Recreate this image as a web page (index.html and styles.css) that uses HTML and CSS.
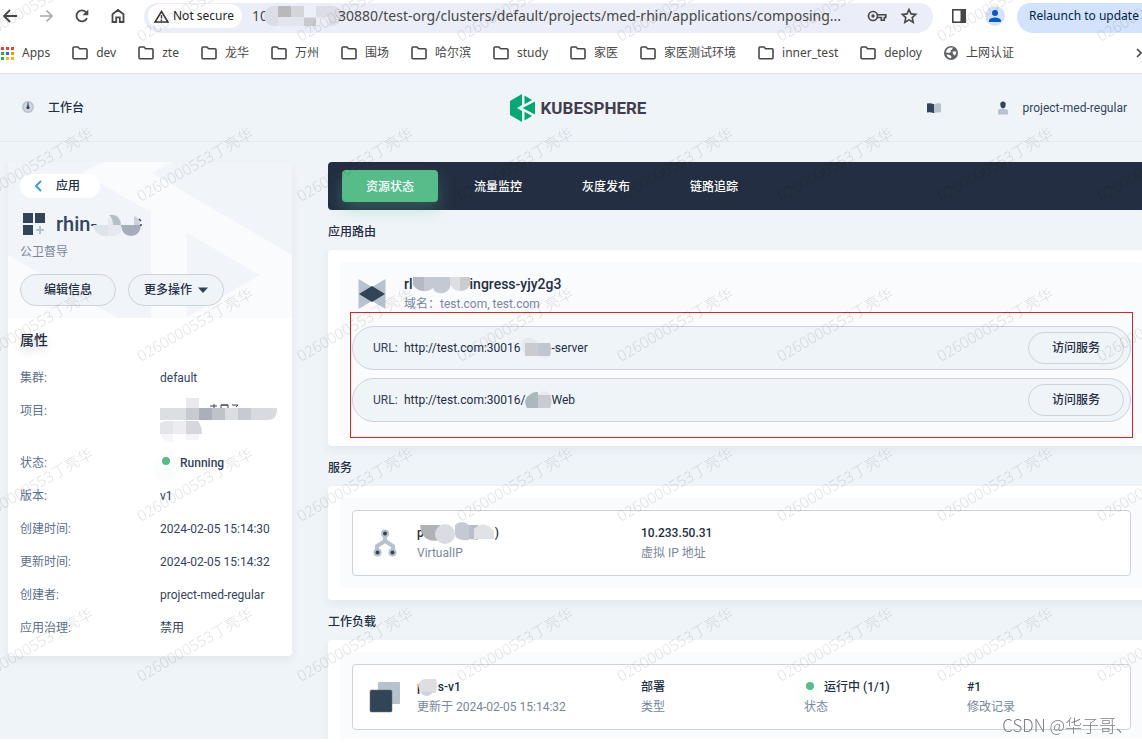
FILE: index.html
```html
<!DOCTYPE html>
<html lang="zh-CN">
<head>
<meta charset="utf-8">
<meta name="viewport" content="width=device-width, initial-scale=1">
<title>KubeSphere</title>
<link rel="stylesheet" href="styles.css">
</head>
<body>
<svg class="sprite" aria-hidden="true">
  <symbol id="folder" viewBox="0 0 16 14"><path d="M1 2.2C1 1.5 1.4 1 2 1h4l1.6 1.8H14c.6 0 1 .4 1 1v8c0 .6-.4 1-1 1H2c-.6 0-1-.4-1-1z" fill="none" stroke="#474747" stroke-width="1.6"/></symbol>
</svg>

<div class="toolbar">
  <div class="nav-buttons">
    <button class="icon-btn" aria-label="Back"><svg width="16" height="16" viewBox="0 0 16 16" fill="none" stroke="#474747" stroke-width="1.8"><path d="M15 8H2.500M8 2 2 8l6 6"/></svg></button>
    <button class="icon-btn" aria-label="Forward"><svg width="16" height="16" viewBox="0 0 16 16" fill="none" stroke="#a9a9a9" stroke-width="1.600"><path d="M2 8h11M8.500 2.500 14 8l-5.500 5.500"/></svg></button>
    <button class="icon-btn" aria-label="Reload"><svg width="16" height="16" viewBox="0 0 16 16"><path d="M13 10.200A5.500 5.500 0 1 1 12.300 4.500L13.500 6" fill="none" stroke="#474747" stroke-width="1.800"/><path d="M14.300 1.500v5.800H8.500z" fill="#474747"/></svg></button>
    <button class="icon-btn" aria-label="Home"><svg width="16" height="16" viewBox="0 0 16 16" fill="none" stroke="#474747" stroke-width="1.800"><path d="M2.500 14V6.300L8 2l5.500 4.300V14H9.800V9.300H6.200V14z"/></svg></button>
  </div>
  <div class="omnibox">
    <button class="chip"><svg width="15" height="13" viewBox="0 0 15 13"><path d="M7.500 1.500 14 12H1z" fill="none" stroke="#333" stroke-width="1.500"/><path d="M7.500 5v3.500M7.500 9.500V11" stroke="#333" stroke-width="1.300"/></svg>Not secure</button>
    <span class="url"><span>10</span><svg class="mosaic" width="76" height="22" viewBox="0 0 76 22"><path d="M10 1h58a10 10 0 0 1 0 20H10A10 10 0 0 1 10 1" fill="#dcdde6"/><path d="M14 1h13v11H14z" fill="#b8b8bd"/><path d="M27 1h13v11H27z" fill="#d3d4dc"/><path d="M40 1h12v11H40z" fill="#eef0f7"/><path d="M14 12h26v9H14z" fill="#e3e5ee"/><path d="M40 13h12v8H40z" fill="#c9cacf"/><path d="M52 12h13v9H52z" fill="#eceef7"/></svg><span class="path">30880/test-org/clusters/default/projects/med-rhin/applications/composing...</span></span>
    <button class="icon-btn key" aria-label="Passwords"><svg width="20" height="12" viewBox="0 0 20 12"><circle cx="6" cy="6" r="4.500" fill="none" stroke="#474747" stroke-width="1.700"/><circle cx="6" cy="6" r="1.700" fill="#474747"/><path d="M10 4.800h8.800v2.700h-1.500v2.700h-3V7.500H10" fill="none" stroke="#474747" stroke-width="1.600"/></svg></button>
    <button class="icon-btn" aria-label="Bookmark"><svg width="16" height="16" viewBox="0 0 16 16"><path d="m8 1.500 2 4.400 4.700.500-3.500 3.200 1 4.700L8 11.900l-4.200 2.400 1-4.700L1.300 6.400 6 5.900z" fill="none" stroke="#474747" stroke-width="1.600"/></svg></button>
  </div>
  <button class="icon-btn panel-btn" aria-label="Side panel"><svg width="16" height="16" viewBox="0 0 16 16"><rect x="1.800" y="1.800" width="12.400" height="12.400" fill="none" stroke="#474747" stroke-width="1.600"/><path d="M9.500 1.500H14.500v13H9.500z" fill="#474747"/></svg></button>
  <button class="icon-btn avatar" aria-label="Profile"><svg width="20" height="20" viewBox="0 0 20 20"><circle cx="10" cy="10" r="10" fill="#d3e3fd"/><circle cx="10" cy="7" r="3" fill="#0b57d0"/><path d="M4 16v-1.500c0-2 4-3 6-3s6 1 6 3V16z" fill="#0b57d0"/></svg></button>
  <button class="relaunch">Relaunch to update</button>
</div>

<nav class="bookmarks" aria-label="Bookmarks">
  <a href="#" class="apps"><svg width="13" height="13" viewBox="0 0 13 13"><path d="M0 0h3v3H0zM5 0h3v3H5zM10 0h3v3h-3z" fill="#ea4335"/><path d="M0 5h3v3H0z" fill="#34a853"/><path d="M5 5h3v3H5z" fill="#1a73e8"/><path d="M10 5h3v3h-3z" fill="#f29900"/><path d="M0 10h3v3H0z" fill="#34a853"/><path d="M5 10h3v3H5zM10 10h3v3h-3z" fill="#fbbc04"/></svg>Apps</a>
  <a href="#"><svg width="16" height="14"><use href="#folder"/></svg>dev</a>
  <a href="#"><svg width="16" height="14"><use href="#folder"/></svg>zte</a>
  <a href="#"><svg width="16" height="14"><use href="#folder"/></svg>龙华</a>
  <a href="#"><svg width="16" height="14"><use href="#folder"/></svg>万州</a>
  <a href="#"><svg width="16" height="14"><use href="#folder"/></svg>围场</a>
  <a href="#"><svg width="16" height="14"><use href="#folder"/></svg>哈尔滨</a>
  <a href="#"><svg width="16" height="14"><use href="#folder"/></svg>study</a>
  <a href="#"><svg width="16" height="14"><use href="#folder"/></svg>家医</a>
  <a href="#"><svg width="16" height="14"><use href="#folder"/></svg>家医测试环境</a>
  <a href="#"><svg width="16" height="14"><use href="#folder"/></svg>inner_test</a>
  <a href="#"><svg width="16" height="14"><use href="#folder"/></svg>deploy</a>
  <a href="#"><svg width="14" height="14" viewBox="0 0 14 14"><circle cx="7" cy="7" r="7" fill="#5f6368"/><path d="M5.500 1.800 9 1.500 8 3.500 6.500 4.500 7 6 4.500 7 2 6.500C2 4.500 3.500 2.500 5.500 1.800M8.500 5.500 12.300 5.500 12 8 10.500 9.500 9 8zM2.500 8.500 6 9 7.500 10.500 7 12.300C4.800 12.300 3 10.800 2.500 8.500" fill="#fff"/></svg>上网认证</a>
  <button class="more" aria-label="More bookmarks"><svg width="5" height="10" viewBox="0 0 5 10" fill="none" stroke="#474747" stroke-width="1.600"><path d="m0 1 4 4-4 4"/></svg></button>
</nav>

<div class="app">
  <header class="header">
    <a href="#" class="workbench"><svg width="16" height="16" viewBox="0 0 16 16"><circle cx="8" cy="7" r="6" fill="#b6c2cd"/><circle cx="8" cy="7" r="4.500" fill="#cdd6df"/><path d="M8 2.500v5" stroke="#324558"/><path d="M8 4.500 9.800 8a2 2 0 0 1-3.600 0z" fill="#324558"/></svg>工作台</a>
    <a href="#" class="logo"><svg width="26" height="28" viewBox="0 0 26 28" fill="#00a971"><path d="M12 0v11L7 14l5 3v11L0 21V7zM14.500 1.500 22 6l-7.500 4.200zM25 7.500v13L12.500 14zM14.500 17.800 22 22l-7.500 4.500z"/></svg><span>KUBESPHERE</span></a>
    <div class="account">
      <button class="icon-btn" aria-label="Documentation"><svg width="16" height="16" viewBox="0 0 16 16"><path d="M1 3.500q3.500-.8 7 .8v9q-3.500-1.500-7-.8z" fill="#324558"/><path d="M15 3.500q-3.500-.8-7 .8v9q3.500-1.500 7-.8z" fill="#b6c2cd"/></svg></button>
      <button class="user"><svg width="16" height="16" viewBox="0 0 16 16"><path d="M3 14.500V11q0-2 2.500-2h5Q13 9 13 11v3.500z" fill="#b6c2cd"/><path d="M5.300 4q0-2.500 2.700-2.500T10.700 4Q10.700 8 8 8.500 5.300 8 5.300 4" fill="#324558"/></svg>project-med-regular</button>
    </div>
  </header>

  <div class="content">
    <aside class="sidebar">
      <div class="side-head">
        <svg class="side-bg" viewBox="0 0 284 156" preserveAspectRatio="none" aria-hidden="true"><path fill="#fafbfd" fill-rule="evenodd" d="M0 93 109 156H0zM95 0 74 11l69 39v106h141V93L144 11 164 0zM179 71l73 42-73 42z"/></svg>
        <a href="#" class="back"><svg width="8" height="12" viewBox="0 0 8 12" fill="none" stroke="#329dce" stroke-width="1.800"><path d="M7 1 2 6l5 5"/></svg>应用</a>
        <h1><svg width="24" height="24" viewBox="0 0 24 24"><path d="M1 1h10v10H1zM13 1h10v10H13zM1 13h10v10H1z" fill="#324558"/><path d="M17 14h2v3h3v2h-3v3h-2v-3h-3v-2h3z" fill="#b6c2cd"/></svg><span>rhin-</span><svg class="mosaic" width="49" height="22" viewBox="0 0 49 22"><path d="M0 12h15v11A13 13 0 0 1 0 12" fill="#dfe3ea"/><path d="M15 12V5a10 10 0 0 1 13 7v8a12 12 0 0 1-13 2z" fill="#e6e9ef"/><path d="M16 2q11-2 12 10h-8Q20 5 16 2" fill="#b7bec9"/><path d="M28 12h20q-1 11-10 11T28 12" fill="#a6adba"/><path d="M41 3q6 2 6 9h-6z" fill="#cdd1d9"/><path d="m46 6 2 2M47 12h2" stroke="#36435c" stroke-width="1.500"/></svg></h1>
        <p class="desc">公卫督导</p>
        <div class="actions">
          <button class="pill">编辑信息</button>
          <button class="pill">更多操作<svg width="10" height="6" viewBox="0 0 10 6"><path d="M0 .5h10L5 6z" fill="#324558"/></svg></button>
        </div>
      </div>
      <div class="attrs">
        <h2>属性</h2>
        <dl>
          <dt>集群:</dt><dd>default</dd>
          <dt>项目:</dt><dd><svg class="project" width="118" height="39" viewBox="0 0 118 39"><path d="M26-3h13V9H26z" fill="#e9eaed"/><path d="M0 7h26v12H0z" fill="#dcdee3"/><path d="M26 7h13v12H26z" fill="#c8cad0"/><path d="M39 7h13v12H39z" fill="#abafb9"/><path d="M52 7h13v12H52z" fill="#c0c2c9"/><path d="M65 7h13v12H65z" fill="#dcdde2"/><path d="M78 7h13v12H78z" fill="#c7cad2"/><path d="M91 7h26q1 12-10 12H91z" fill="#d8dae0"/><path d="M0 22q6-3 13-2v13H0z" fill="#e4e5ea"/><path d="M13 20h13v13H13z" fill="#ededf1"/><path d="M26 20h12q4 5 4 13H26z" fill="#d5d7dd"/><path d="M0 33h13v8Q3 41 0 33M26 33h13v6H26z" fill="#f5f5f7"/><path d="M50 5h7M54 3v4M61 4h7M61 7V4h7v3M72 4h6l-2 2" fill="none" stroke="#36435c"/></svg></dd>
          <dt>状态:</dt><dd class="strong"><i class="dot"></i>Running</dd>
          <dt>版本:</dt><dd>v1</dd>
          <dt>创建时间:</dt><dd>2024-02-05 15:14:30</dd>
          <dt>更新时间:</dt><dd>2024-02-05 15:14:32</dd>
          <dt>创建者:</dt><dd>project-med-regular</dd>
          <dt>应用治理:</dt><dd>禁用</dd>
        </dl>
      </div>
    </aside>

    <main class="main">
      <nav class="tabs">
        <a href="#" class="active">资源状态</a>
        <a href="#">流量监控</a>
        <a href="#">灰度发布</a>
        <a href="#">链路追踪</a>
      </nav>

      <h2 class="section-title">应用路由</h2>
      <section class="card"><div class="panel">
        <div class="route">
          <svg width="40" height="40" viewBox="0 0 40 40"><path d="M6.500 5 20 13l13.500-8v30L20 27 6.500 35z" fill="#b6c2cd"/><path d="M7 20 20 12l13 8-13 8z" fill="#324558"/></svg>
          <div>
            <h3><span>rl</span><svg class="mosaic" width="57" height="20" viewBox="0 0 57 20"><path d="M0 3h11v14Q4 17 0 11z" fill="#b4b9c3"/><path d="M11 3h9v11q-4 4-9 3z" fill="#c6c9d2"/><path d="M20 3h17v11q-4 6-10 5-7 0-7-7z" fill="#c5c9d3"/><path d="M37 3h10v14q-6 0-10-6z" fill="#dcdee1"/><path d="M47 3h10v8q-3 6-10 6z" fill="#cbccce"/></svg><span>ingress-yjy2g3</span></h3>
            <p>域名：test.com, test.com</p>
          </div>
        </div>
        <div class="urls">
          <div class="url-row"><span class="label">URL:</span><span>http://test.com:30016</span><svg class="mosaic" width="31" height="22" viewBox="0 0 31 22"><path d="M1 4q7-7 15 0v13H4Q-1 12 1 4" fill="#e6e9ee"/><path d="M4 6h13v13H4z" fill="#c9cbd1"/><path d="M17 6h12q2 6 0 13H17z" fill="#c0c6d0"/><path d="M17 19h12q-6 5-12 0" fill="#e9edf3"/></svg><span>-server</span><button class="pill">访问服务</button></div>
          <div class="url-row"><span class="label">URL:</span><span>http://test.com:30016/</span><svg class="mosaic web" width="28" height="22" viewBox="0 0 28 22"><path d="M14 3v16H3Q-3 8 11 3z" fill="#adb8bc"/><path d="M14 6h12q3 6 0 13H14z" fill="#c9cbd3"/><path d="M14 6q6-8 12 0z" fill="#e7ebf1"/></svg><span>Web</span><button class="pill">访问服务</button></div>
          <div class="highlight"></div>
        </div>
      </div></section>

      <h2 class="section-title">服务</h2>
      <section class="card"><div class="panel">
        <div class="item">
          <svg width="40" height="40" viewBox="0 0 40 40"><path d="M20 8v10l-8 5v7M20 18l8 5v7" fill="none" stroke="#b6c2cd" stroke-width="4"/><g fill="#b6c2cd"><circle cx="20" cy="10.500" r="4"/><circle cx="12.500" cy="29.500" r="4"/><circle cx="27.500" cy="29.500" r="4"/></g><g fill="#324558"><circle cx="20" cy="10.500" r="2"/><circle cx="12.500" cy="29.500" r="2"/><circle cx="27.500" cy="29.500" r="2"/></g></svg>
          <div><h4><span>p</span><svg class="mosaic" width="75" height="24" viewBox="0 0 75 24"><path d="M0 4h20v15Q2 23 0 4" fill="#b0b2b6"/><circle cx="25" cy="13" r="10" fill="#d9dce1"/><path d="M35 4q7-6 14 0v15q-14 1-14-6z" fill="#c5c9d2"/><path d="M49 4h9v15l-9-1z" fill="#b9bfca"/><path d="M54 8q10-10 20 2v8H54z" fill="#e0e2e6"/></svg><span>)</span></h4><p>VirtualIP</p></div>
          <div><h4>10.233.50.31</h4><p>虚拟 IP 地址</p></div>
        </div>
      </div></section>

      <h2 class="section-title">工作负载</h2>
      <section class="card"><div class="panel last">
        <div class="item">
          <svg width="40" height="40" viewBox="0 0 40 40"><rect x="13" y="5" width="22" height="22" rx="1" fill="#b6c2cd"/><rect x="5" y="13" width="22" height="22" rx="1.500" fill="#324558" stroke="#5d6e7f" stroke-width=".5"/></svg>
          <div><h4><span>p</span><svg class="mosaic narrow" width="20" height="20" viewBox="0 0 20 20"><path d="M0 8q2-6 8-6h10q2 6 0 14H2z" fill="#dedee0"/><path d="M2 15h13q-6 8-13 0" fill="#cfd1de"/></svg><span>s-v1</span></h4><p>更新于 2024-02-05 15:14:32</p></div>
          <div><h4>部署</h4><p>类型</p></div>
          <div><h4><i class="dot"></i>运行中 (1/1)</h4><p>状态</p></div>
          <div><h4>#1</h4><p>修改记录</p></div>
        </div>
      </div></section>
    </main>
  </div>
</div>

<svg class="watermark" width="100%" height="100%" aria-hidden="true">
  <defs><pattern id="wm" x="130" y="120" width="160" height="160" patternUnits="userSpaceOnUse"><text transform="translate(11 82) rotate(-30)">0260000553丁亮华</text></pattern></defs>
  <rect width="100%" height="100%" fill="url(#wm)"/>
</svg>
<div class="credit">CSDN @华子哥、</div>
</body>
</html>
```
FILE: styles.css
```css
* { box-sizing: border-box; }
body {
  margin: 0;
  height: 100vh;
  padding-bottom: 4px;
  display: flex;
  flex-direction: column;
  overflow: hidden;
  background: #fff;
  color: #242e42;
  font: 12px/20px Roboto, "Noto Sans CJK SC", sans-serif;
}
h1, h2, h3, h4, p, dl, dd { margin: 0; }
a { color: inherit; text-decoration: none; }
button { border: 0; padding: 0; background: none; color: inherit; font: inherit; white-space: nowrap; }
svg { flex: none; overflow: visible; }
.sprite { position: absolute; width: 0; height: 0; }
.icon-btn { display: flex; align-items: center; justify-content: center; }

/* Browser toolbar */
.toolbar {
  flex: none;
  display: flex;
  height: 33px;
  padding-top: 3px;
  overflow: hidden;
  font-family: "Noto Sans", "Noto Sans CJK SC", sans-serif;
}
.toolbar > * { flex: none; padding-bottom: 4px; }
.nav-buttons { display: flex; align-items: center; gap: 20px; padding-left: 2px; }
.toolbar .omnibox {
  flex: 1 1 0;
  min-width: 0;
  display: flex;
  align-items: center;
  gap: 10px;
  margin-left: 18px;
  padding: 0 16px 4px 4px;
  border-radius: 14px 14px 17px 17px;
  background: #ebeef8;
}
.chip {
  display: flex;
  align-items: center;
  gap: 4px;
  height: 24px;
  padding: 0 8px 0 6px;
  border-radius: 12px;
  background: #fff;
  color: #1f1f1f;
}
.url { flex: 1; min-width: 0; display: flex; align-items: center; font-size: 14px; color: #474747; white-space: nowrap; }
.url .mosaic { margin: 0 -2px 0 -4px; }
.key { margin-right: 4px; }
.panel-btn { margin-left: 18px; }
.avatar { margin-left: 18px; }
.relaunch { width: 125px; margin-left: 12px; padding-left: 12px; border-radius: 14px 0 0 17px; background: #d3e3fd; color: #041e49; text-align: left; }

/* Bookmarks bar */
.bookmarks {
  flex: none;
  display: flex;
  align-items: center;
  gap: 22px;
  height: 41px;
  padding-left: 1px;
  border-bottom: 1px solid #dfe2e5;
  color: #474747;
  font-family: "Noto Sans", "Noto Sans CJK SC", sans-serif;
  white-space: nowrap;
  overflow: hidden;
}
.bookmarks a { display: flex; align-items: center; gap: 8px; }
.more { margin-left: auto; display: flex; }

/* Application */
.app { flex: 1; min-height: 0; overflow: hidden; background: #eff4f9; }
.header {
  display: grid;
  grid-template-columns: 1fr auto 1fr;
  align-items: center;
  height: 68px;
  padding: 0 2px 0 16px;
  border-bottom: 1px solid #e4e9ef;
}
.workbench { display: flex; align-items: center; gap: 12px; padding-left: 4px; font-weight: 500; }
.logo { display: flex; align-items: center; gap: 5px; color: #443d4e; font-size: 17px; line-height: 28px; font-weight: 700; }
.account { display: flex; justify-content: flex-end; gap: 53px; padding-right: 13px; color: #36435c; }
.user { display: flex; align-items: center; gap: 12px; }
.content { display: flex; align-items: flex-start; gap: 36px; padding: 20px 0 0 8px; }

.sidebar { flex: none; width: 284px; border-radius: 4px; background: #fff; box-shadow: 0 4px 8px rgba(36, 46, 66, .06); }
.side-head { position: relative; padding: 12px; border-radius: 4px 4px 0 0; background: #f1f5fa; }
.side-head > * { position: relative; }
.side-head .side-bg { position: absolute; inset: 0; width: 100%; height: 100%; }
.back { display: flex; align-items: center; gap: 14px; width: 80px; height: 24px; padding-left: 14px; border-radius: 12px; background: #fff; font-weight: 500; }
.side-head h1 { display: flex; align-items: center; height: 28px; margin-top: 12px; padding-left: 2px; color: #36435c; font-size: 20px; line-height: 28px; font-weight: 500; }
.side-head h1 span { margin-left: 10px; }
.side-head h1 .mosaic { margin-left: -4px; }
.desc { margin-top: 4px; color: #79879c; }
.actions { display: flex; gap: 12px; margin-top: 12px; }
.pill {
  display: flex;
  align-items: center;
  justify-content: center;
  gap: 6px;
  width: 96px;
  height: 32px;
  border: 1px solid #ccd3db;
  border-radius: 16px;
  background: #eff4f9;
  color: #242e42;
  font-weight: 500;
}
.attrs { padding: 12px 12px 18px; }
.attrs h2 { font-size: 14px; line-height: 20px; font-weight: 500; text-shadow: 0 4px 8px rgba(36, 46, 66, .2); }
.attrs dl { display: grid; grid-template-columns: 128px 1fr; column-gap: 12px; row-gap: 13px; margin-top: 18px; }
.attrs dt { color: #5f708a; }
.attrs dd { color: #36435c; }
.attrs .strong { font-weight: 500; }
.project { display: block; }
.dot { display: inline-block; width: 8px; height: 8px; margin: 0 10px 2px 2px; border-radius: 50%; background: #55bc8a; box-shadow: 0 8px 16px rgba(85, 188, 138, .36); }

.main { flex: 1; min-width: 0; margin-right: -13px; }
.tabs { display: flex; gap: 12px; padding: 8px 14px; border-radius: 4px; background: #242e42; }
.tabs a { width: 96px; height: 32px; border-radius: 4px; color: #fff; font-weight: 500; line-height: 34px; text-align: center; }
.tabs .active { background: #55bc8a; box-shadow: 0 8px 16px rgba(85, 188, 138, .3); }
.section-title { padding: 12px 0 8px; color: #242e42; font-size: 12px; line-height: 20px; font-weight: 500; }
.card { padding: 12px; border-radius: 4px; background: #fff; box-shadow: 0 4px 8px rgba(36, 46, 66, .06); }
.panel { padding: 12px; border-radius: 4px; background: #f9fbfd; }
.panel.last { padding-bottom: 40px; }
.route { display: flex; gap: 12px; height: 40px; margin-bottom: 12px; }
.route h3, .item h4 { display: flex; align-items: center; height: 20px; font-weight: 500; font-size: 12px; }
.route h3 { font-size: 14px; }
.route p, .item p { color: #79879c; }
.urls { position: relative; display: grid; gap: 8px; }
.url-row { display: flex; align-items: center; height: 44px; padding: 0 6px 0 20px; border: 1px solid #ccd3db; border-radius: 22px; background: #eff4f9; }
.url-row .label { width: 31px; color: #36435c; }
.url-row .pill { margin-left: auto; }
.url-row .web { margin-left: -2px; }
.highlight { position: absolute; inset: -14px -2px -16px; border: 1px solid #ec1c24; pointer-events: none; }
.item {
  display: grid;
  grid-template-columns: 40px 212fr 151fr 151fr 151fr;
  column-gap: 12px;
  align-items: center;
  padding: 12px;
  border: 1px solid #ccd3db;
  border-radius: 4px;
  background: #fff;
}
.item .mosaic { margin-left: -4px; }
.item .narrow { margin-left: -6px; }

/* Overlays */
.watermark { position: fixed; inset: 0; pointer-events: none; }
.watermark text { font: 300 15px "Noto Sans", "Noto Sans CJK SC", sans-serif; fill: rgba(0, 0, 0, .12); }
.credit { position: fixed; right: 9px; bottom: 6px; color: #7c7e82; font: 300 17px/24px "Noto Sans CJK SC", sans-serif; }
```
